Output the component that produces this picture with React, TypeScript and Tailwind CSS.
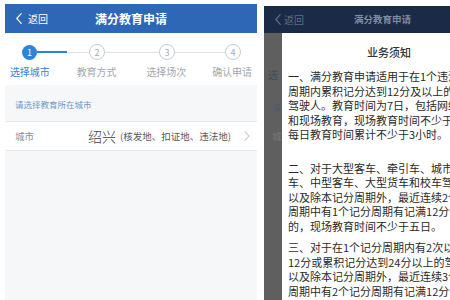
import type { ReactNode } from "react";

const cjk = "font-['Noto_Sans_CJK_SC','Noto_Sans',sans-serif]";

function Chevron({ className, color }: { className?: string; color: string }) {
  return (
    <svg viewBox="0 0 6 11" className={className} fill="none">
      <polyline points="5.2,0.6 0.8,5.5 5.2,10.4" stroke={color} strokeWidth="1.2" strokeLinecap="round" strokeLinejoin="round" />
    </svg>
  );
}

function StepCircle({ n, active }: { n: number; active?: boolean }) {
  if (active) {
    return (
      <div className="flex h-[15px] w-[15px] shrink-0 items-center justify-center rounded-full bg-[#2b84d9] text-[9px] leading-none text-white">
        {n}
      </div>
    );
  }
  return (
    <div className="flex h-[16px] w-[16px] shrink-0 items-center justify-center rounded-full border border-[#c3cad3] text-[9px] leading-none text-[#a5adb7]">
      {n}
    </div>
  );
}

function Line({ children }: { children: ReactNode }) {
  return <div className="h-[14.5px] whitespace-nowrap leading-[14.5px]">{children}</div>;
}

export default function App() {
  return (
    <div className={`flex h-[300px] w-[450px] overflow-hidden bg-white ${cjk}`}>
      {/* left screen */}
      <div className="ml-[5px] mt-[4px] flex w-[252px] shrink-0 flex-col bg-[#f6f7f9]">
        <header className="flex h-[29px] items-center bg-[#2e67b5] text-white">
          <div className="flex w-[60px] items-center pl-[11px]">
            <Chevron className="h-[11px] w-[6px]" color="#ffffff" />
            <span className="ml-[6px] text-[10px] leading-none">返回</span>
          </div>
          <h1 className="flex-1 text-center text-[12px] font-bold leading-none">满分教育申请</h1>
          <div className="w-[60px]" />
        </header>

        <section className="h-[52px] bg-white">
          <div className="flex items-center pl-[17px] pt-[11px]">
            <StepCircle n={1} active />
            <div className="flex w-[52px] items-center">
              <div className="h-[2px] w-[30px] bg-[#2b84d9]" />
              <div className="h-px flex-1 bg-[#dde2e8]" />
            </div>
            <StepCircle n={2} />
            <div className="h-px w-[54px] bg-[#dde2e8]" />
            <StepCircle n={3} />
            <div className="h-px w-[50px] bg-[#dde2e8]" />
            <StepCircle n={4} />
          </div>
          <div className="mt-[6px] flex text-[10px] leading-[12px] text-[#a2a8b0]">
            <span className="w-[50px] text-center text-[#3d80d1]">选择城市</span>
            <span className="ml-[17px] w-[50px] text-center">教育方式</span>
            <span className="ml-[20px] w-[50px] text-center">选择场次</span>
            <span className="ml-[16px] w-[50px] whitespace-nowrap text-center">确认申请</span>
          </div>
        </section>

        <div className="flex h-[36px] items-center pl-[10px] pt-[2px] text-[8.5px] text-[#6a97cc]">请选择教育所在城市</div>

        <div className="flex h-[30px] items-center border-y border-[#e7e9ec] bg-white pl-[10px]">
          <span className="w-[73px] text-[9.5px] text-[#8b9098]">城市</span>
          <span className="text-[14px] font-light leading-none text-[#3c3c3c]">绍兴</span>
          <span className="ml-[4px] whitespace-nowrap text-[9.5px] text-[#555a60]">(核发地、扣证地、违法地)</span>
          <Chevron className="ml-auto mr-[7px] h-[10px] w-[6px] rotate-180" color="#c4c7cc" />
        </div>
      </div>

      {/* right screen, dimmed under the notice */}
      <div className="ml-[7px] mt-[6px] flex w-[186px] shrink-0 flex-col overflow-hidden">
        <header className="flex h-[27px] w-[260px] items-center bg-[#1a2a47] text-[#5f6d85]">
          <Chevron className="ml-[11px] h-[11px] w-[6px]" color="#5f6d85" />
          <span className="ml-[3px] text-[10px] leading-none">返回</span>
          <h1 className="ml-[50px] text-[9.5px] font-bold leading-none text-[#7f8ca3]">满分教育申请</h1>
        </header>
        <div className="flex flex-1">
          <div className="flex w-[18px] shrink-0 flex-col overflow-hidden bg-[#5f5f5f] text-[10px] leading-none">
            <span className="ml-[4px] mt-[37px] text-[#3d4b63]">选</span>
            <span className="ml-[8px] mt-[23px] text-[8.5px] text-[#4a5a72]">请</span>
            <span className="ml-[8px] mt-[20px] text-[9.5px] text-[#777777]">城</span>
          </div>
          <div className="w-[214px] shrink-0 bg-white px-[6px] text-[11px] text-[#2a2a2a]">
            <div className="pt-[12px] text-center text-[11px] font-medium leading-[14px] text-[#333333]">业务须知</div>
            <div className="mt-[10px]">
              <Line>一、满分教育申请适用于在1个违法记分</Line>
              <Line>周期内累积记分达到12分及以上的机动车</Line>
              <Line>驾驶人。教育时间为7日，包括网络学习</Line>
              <Line>和现场教育，现场教育时间不少于3日，</Line>
              <Line>每日教育时间累计不少于3小时。</Line>
            </div>
            <div className="mt-[19px]">
              <Line>二、对于大型客车、牵引车、城市公交</Line>
              <Line>车、中型客车、大型货车和校车驾驶人</Line>
              <Line>以及除本记分周期外，最近连续2个记分</Line>
              <Line>周期中有1个记分周期有记满12分记录</Line>
              <Line>的，现场教育时间不少于五日。</Line>
            </div>
            <div className="mt-[7px]">
              <Line>三、对于在1个记分周期内有2次以上达到</Line>
              <Line>12分或累积记分达到24分以上的驾驶人</Line>
              <Line>以及除本记分周期外，最近连续3个记分</Line>
              <Line>周期中有2个记分周期有记满12分记录</Line>
            </div>
          </div>
        </div>
      </div>
    </div>
  );
}
